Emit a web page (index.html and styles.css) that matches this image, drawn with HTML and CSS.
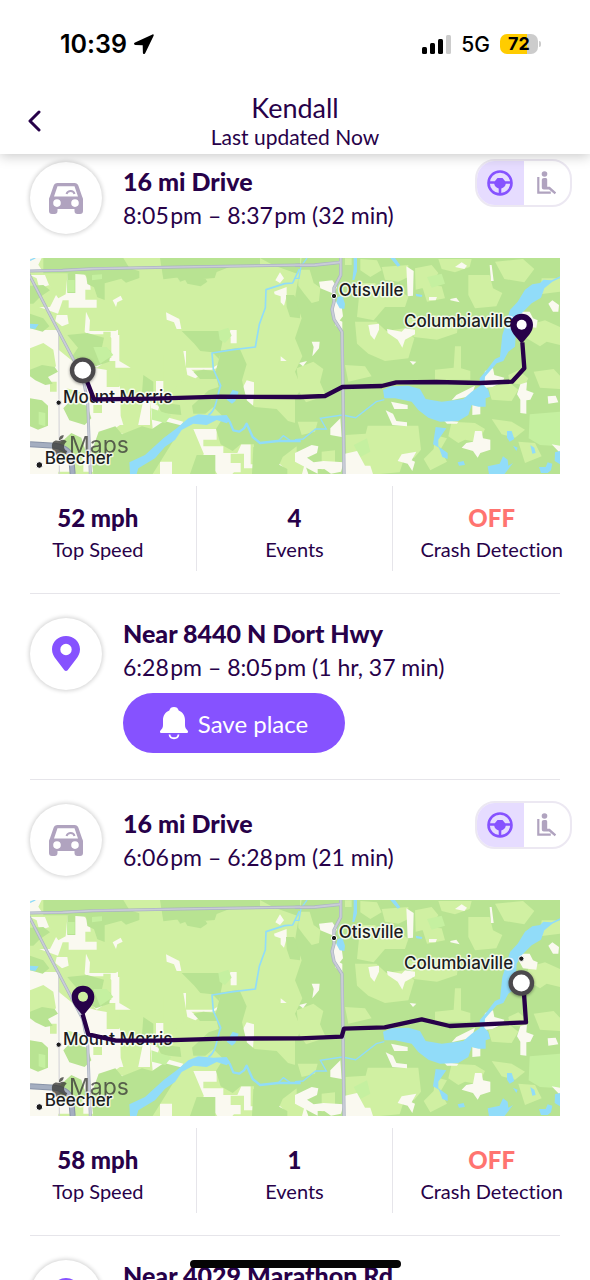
FILE: index.html
```html
<!DOCTYPE html>
<html lang="en">
<head>
<meta charset="utf-8">
<meta name="viewport" content="width=device-width, initial-scale=1">
<title>Kendall</title>
<link rel="stylesheet" href="styles.css">
</head>
<body>
<svg class="defs" aria-hidden="true">
  <symbol id="i-car" viewBox="0 0 34 32">
    <path fill="currentColor" fill-rule="evenodd" d="M8.500 1h17c2 0 3.400 1 4 3l3.600 10.500c.5 1 .9 1.700.9 3V29a3 3 0 0 1-3 3h-2.500a3 3 0 0 1-3-3v-2h-17v2a3 3 0 0 1-3 3H3a3 3 0 0 1-3-3V17.500c0-1.300.4-2 .9-3L4.500 4c.6-2 2-3 4-3zM8.500 4.200 5 14.500h24L25.500 4.200zM8 17.300a3.800 3.800 0 1 0 0 7.600 3.800 3.800 0 0 0 0-7.600zm18 0a3.800 3.800 0 1 0 0 7.600 3.800 3.800 0 0 0 0-7.600z"/>
    <path d="M17.500 12c1.500-4 7-4 8 0" fill="none" stroke="currentColor" stroke-width="2"/>
  </symbol>
  <symbol id="i-pin" viewBox="0 0 28 36">
    <path fill="currentColor" fill-rule="evenodd" d="M14 0c7.700 0 14 5.800 14 13.300 0 4.200-1.800 7.200-4.200 10.300L15.600 34.300a2 2 0 0 1-3.200 0L4.200 23.600C1.800 20.500 0 17.500 0 13.300 0 5.800 6.300 0 14 0zm0 7.800a5.700 5.700 0 1 0 0 11.400 5.700 5.700 0 0 0 0-11.400z"/>
  </symbol>
  <symbol id="i-wheel" viewBox="0 0 26 26">
    <circle cx="13" cy="13" r="11.500" fill="none" stroke="currentColor" stroke-width="2.600"/>
    <path fill="currentColor" d="M2 11.300h5.800L10.500 8h5l2.700 3.300H24v2.400h-5.200c-.5 2.400-2 4-4.500 4.700V24h-2.600v-5.600c-2.500-.7-4-2.300-4.500-4.700H2z"/>
  </symbol>
  <symbol id="i-seat" viewBox="0 0 20 24">
    <circle cx="7.500" cy="3" r="2.800" fill="currentColor"/>
    <path fill="currentColor" d="M7 7h1.500c1 0 1.700.7 1.700 1.700v7h2.600l6.400 5.800-1.500 1.700-5.700-4.700H7c-1.500 0-2.200-.8-2.200-2.200V9.200C4.800 7.800 5.600 7 7 7z"/>
    <path d="M1.300 6v15.700h12.500" fill="none" stroke="currentColor" stroke-width="2.200"/>
  </symbol>

  <symbol id="base-map" viewBox="0 9 1590 648">
    <rect y="9" width="1590" height="648" fill="#d0f0a2"/>
    <!-- open land, west -->
    <g fill="#faf9f0">
      <path d="M0 9h35l-10 20 12 18H0zM0 60h45l12 30 28 40 22-12 6-66h45l22 28 2 24h-16v30h34v24h-84v-22H98L84 176l-84-30zM80 180h32l4 26-20 8-20-16zM168 170l12 26-2 32h78l8-4v20l-20 6-6-12h-66l-8-8zM244 240h24v78l34 20h-46v-20H230l-30 20-60-60 50 50 54-20zM0 212l30 10 10 18H0zM0 225h85v432H0z"/>
      <path d="M80 280l50 40 70 20 30 5 40 50v115l-30 20 60 10 20 110H80zM270 430h90v80h-90zM378 378h24v54h-24zM408 172l40 20 6 30h-14l-8-20-22-8zM460 288h8v50h80l40-24v18l-44 12h-60l24 18-12 8-24-10zM602 225h18v40h-18v-18h-18zM750 52l12 18-12 14-14-8zM732 110l38-14v28l-8 28-10-10v-18l-18-6zM752 304l18 14h-18zM650 376l22 6v32l-4 50h-18v-36l-12-30zM444 55l10 12-6 12zM248 136l24-14 6 12-16 8-4 14z"/>
      <path d="M360 440l28 14-8 24 80 22-20 30-70 10zM490 522h70v32h-40v20h60v20h42l12-26h28v60h40v12h-60v-44h-40v28h30v28h-20l-14 14h-30l-18-26h-48v-30l20-12zM390 620h36v37h-36zM306 586l20 20 38-20 20 24-20 47h-70zM752 576l-8 46 28 26-50-26 2-20zM800 595h60v62h-44l8-30z"/>
    </g>
    <g fill="#d0f0a2">
      <path d="M28 100l30-10 22 26-20 40H0V60l20 10zM0 280l40-16 30 20 8 50-28 20H0zM60 380h20v30H60zM230 346h38v50h-38zM270 395h60l10 40-16 78-40 10-12-40zM190 450h26v24h-26zM110 400l50 14-4 36-46-10zM400 300h60v76l-60 60zM220 230h22v14h-22z"/>
      <path d="M0 450l30 14 24 20v20H0zM120 590h40v66h-36z"/>
    </g>
    <!-- woodland, west -->
    <g fill="#b8e392">
      <path d="M40 9h240l18 30 30 10v20l-40 14-14-12-50 14v50l-22-8-10-30-20-10-4-28-60-4H40zM112 48h24v66h-24zM0 92l40-2 20 16-30 20-20 20H0zM0 176l40 14 18 24-20 16-38-10zM112 240l60-6 50 14-6 28 26 12-4 32-40 14-24-16-50-10 20-30-20-24zM0 344l36-14 38 6 10 14-30 16 14 20-22 4-30-14-16-12zM0 430l36 6 18 16v60l-30 12-24-10zM100 460l20-22 52 14 12 38-20 20-46-14zM84 570l40-36 30 14 16 50-36 30-40-10z"/>
      <path d="M206 530l50-16 20 24 60-24 30 8 36-24 56 14-90 145H190l-8-60zM390 9h300v20l-90 6-40 16-6 18-44 4-30-10-80 10zM520 60l12 20-20 14-40-8-8-14zM690 9h120v50l-40-14-40-14zM768 120h24l18 30v40l-30-4-10-30zM420 30h80l10 30-60 20zM455 228h122v34l-10 50-20-20-36-4-18-22zM548 290l80-12 22 50-14 48 14 60 24 20 66 6 34 36 36 10v58l-52 40-20 46-66-4V568h-40l-24 20-36-20-14-46 22-36-30-30-24 20h-36l-4-24 50-46 30-10-10-44 14-50zM380 440l70 10 4 30-60-6zM340 360l30 20v30l-34 4zM800 560h60v60h-60zM500 600h56v57h-76zM670 576h60l-8 40 50 26v15h-106zM490 350l30-6 36 4 4 24-50 0z"/>
    </g>
    <g fill="#c5f0a0">
      <path d="M565 228l30-10 10 24-20 22-16-10zM112 75h22v36h-22zM364 460l60 20-18 24-40-10zM186 60l30-2v14l-30 4zM26 470l20 4v40l-20-6zM190 276l40 0 20 24-40 26z"/>
    </g>
    <!-- eastern half -->
    <g transform="translate(795 0)">
      <path fill="#b8e392" d="M20 9h775v648H40L10 570l-10-20V430l20-30-20-50 22-46L0 250l20-60L0 130z"/>
      <g fill="#d0f0a2">
        <path d="M10 44h34l12 40 20 14-4 40-22 6-24-30-16-22zM5 340l50-20 30 22-10 40 18 40-60 20-20-30zM150 10h20v20h-20zM196 12l50 4 14 30-34 20-30-20zM260 36l80-6v36l-30 14-40-6zM360 40l50-10 20 24-24 40-44 10zM430 12h100l-6 24-44 16-40-10zM520 60h64l10 40 28 14-18 40-64 6-20-40zM196 84h44l20 22 44-10 36 30-10 30-60 0-34 40-50-10zM180 200l64 0 30 28 54-8 30 30-18 60-70 8-50-22-34-30zM340 190l60 10 20-20 70 14-4 40-60 20-70-8zM480 274h18v66l28 8v26H420v-30l56-6zM150 330l60 4 20 30-70 16zM380 90l60 4 10 36-54 10zM640 360l30-14 30 24-10 20-46-6zM700 210l50-14 45 20v54l-40-10-20 14-40-24zM600 20l84-8 34 30-30 40-60-10zM740 70l55 0v40l-60 8zM152 540l60-4 6-24 152 0 8 72-20 24-30 0-14 44-60 5h-56l-44-40zM420 540l36 10-20 34 20 36-50 26-20-34 30-30zM470 500l70 4 30 18-20 40-40-8-20 10-30-20zM590 492l60 8 40 24-30 24-40-10zM670 560l50 4 20 40-50 20zM80 590l40-4v50l-40 8zM8 500h60l-8 30-40 10zM580 400l60-20 30 24-20 34-60-4zM716 350l60-8 19 20v40l-60-4z"/>
      </g>
      <g fill="#c5f0a0"><path d="M704 478l91-8v104l-60-4-34-20zM396 66l44-10 10 30-40 12zM176 570l40-20 10 40-30 16z"/></g>
      <g fill="#faf9f0">
        <path d="M72 80l40-4 14 20-10 20-40-16zM118 140l20 0 6 44-16 20-14-20zM334 34l22 14-2 74-16 2zM584 30h6l6 48h-8zM480 36l20-14 16 10-8 10zM402 126h24l-4 10h-20zM466 132l18-4 10 14-28-6zM760 146l12-10 20 14-2 20-16 0zM660 170h44l10 20 14 6-4 22-40-4zM220 210l32-4v18l-14 30-12-14zM276 222l44 8 10-10 30 4v14l-30 16-8 24-14-24-30-20zM50 260l24 0-2 20-20 24 4-28zM12 324l24-6-12 16zM344 318l20 2-10 10zM120 190l22 10v30l-22-20zM570 348l24-8 4 20 30 8-6 14-30 14-30 4zM540 392l-10 30-60 14 14-16zM676 388l20-6-2 24 22 8-10 20-12 2v40l-18-2 0-40-10-16zM758 424l24-2 8 20-30 4zM532 450l24 4v24l-24 2zM288 440l50 10 0 12-40 0zM272 466l22 10 10 22 32 4v12l-44-4zM446 496l44 4 6-8-10 14-30 0zM106 520l30-30 4 56-34-6zM540 528l20 0 4 22 22 4 0 30-30 10-8 14-14-20-34-10 14-14 20-4zM320 598l44-8-14 26 10 4-8 28-14-22-30-8zM0 594l50-24 20 4-4 20-30 14 20 14 30-4 60 4-8 28-30 6-20-14-20 0v14L0 620zM150 596l36-8 24 44 16 0 8 25h-84zM770 568l25 4v22z"/>
      </g>
      <g fill="#91dcf9">
        <path d="M264 404L290 394 340 392 375 402 392 432 440 440 505 432 530 410 556 392 554 370 575 345 600 312 615 305 622 240 630 215 645 165 668 140 690 104 712 88 735 84 745 74 770 76 795 64V69L772 80 748 100 738 128 710 145 680 175 665 200 660 275 640 290 625 318 605 325 570 365 568 392 580 405 585 425 572 430V455H550L530 450 520 480 490 498 435 500 400 488 370 465 350 440 300 430 268 430z"/>
        <path d="M422 516l32 4-24 34 0 20 28 20 0 18-16-6-10-28-18-10 4-26zM128 126l14-4 8 24-2 16-14-2-10-18zM286 9h14l16 22-8 4zM176 9h10v40l-8 26h-6l4-36zM636 528l14 0 8 24-14 8-8-12zM654 572l14 6-4 10zM706 570l12 8 4 16-10 2zM578 634l36-8 10-22 14 10 2 18 14-8-26 34-46 0zM780 592l15-4v40l-16-10zM732 636l20 0 6-14 14 4-4 20-10 8h-20zM488 622l18-4 4 12-18 2zM362 116l20 4-2 6-16-2z"/>
      </g>
      <g fill="none" stroke="#91dcf9" stroke-width="4">
        <path d="M268 434l-24 6-62 48-40-8-66 10 18 32-32 0-38 30-24 2"/><path d="M36 9L18 34l-6 36-12 0"/>
      </g>
      <g fill="none" stroke="#abb3c3" stroke-width="10" stroke-linejoin="round">
        <path d="M137 9v52l-20 38v42l-6 22 6 30 24 38 3 180 3 246"/><path d="M0 31l60-1 77-8"/>
      </g>
      <g fill="none" stroke="#c9ccd7" stroke-width="6" stroke-linejoin="round">
        <path d="M137 9v52l-20 38v42l-6 22 6 30 24 38 3 180 3 246"/><path d="M0 31l60-1 77-8"/>
      </g>
    </g>
    <!-- rivers, west -->
    <path fill="#91dcf9" d="M298 622L345 600 400 550 440 520 475 490 505 478 550 482 590 480 600 495 590 505 560 495 530 510 490 506 455 525 435 555 405 575 375 610 325 640 320 657H300zM590 434l18-30 18 6-10 28-10 8zM0 206l26 2-10 14-16-2z"/>
    <g fill="none" stroke="#91dcf9" stroke-linejoin="round">
      <path stroke-width="5" d="M535 480c25-14 26-60 37-88l-22-50-4-48 64-10 66-8 12-68 18-50 2-54 56-18 24-2 20-42"/>
      <path stroke-width="7" d="M590 490l10 12 10 24 18 4 14-10 8-14 18 40 22 18 54-6 68 0"/>
      <path stroke-width="4" d="M742 560l18-18 20 14M0 16l16-7"/>
    </g>
    <!-- roads, west -->
    <path fill="none" stroke="#d0d0d6" stroke-width="3" d="M86 225l2 432"/>
    <g fill="none" stroke="#aab2c2" stroke-width="9">
      <path d="M0 48l98-2 92-5 260-5 360-6M-4 56l62 120 100 190 15 74 8 217"/>
    </g>
    <path fill="none" stroke="#cacdd8" stroke-width="5" d="M0 48l98-2 92-5 260-5 360-6M-4 56l62 120 100 190 15 74 8 217"/>
    <path fill="none" stroke="#8994a8" stroke-width="18" d="M0 568l76 4q44 8 48 40l4 45"/>
    <path fill="none" stroke="#a4aec0" stroke-width="12" d="M0 568l76 4q44 8 48 40l4 45"/>
    <!-- attribution -->
    <g fill="#3b3b38" opacity=".78">
      <path d="M88 558c10-6 18-4 22 2-12 8-10 24 2 28-6 14-14 16-24 10-8 6-14 0-18-8-10-20-2-40 18-32zM87 555c0-10 6-14 14-15 0 8-5 15-14 15z"/>
      <text class="map-brand" x="117" y="594">Maps</text>
    </g>
    <g class="map-label">
      <text x="99" y="443">Mount Morris</text>
      <text x="44" y="627">Beecher</text>
      <text x="926" y="123">Otisville</text>
      <text x="1122" y="215">Columbiaville</text>
    </g>
    <g fill="#1c1c1e" stroke="#fff" stroke-width="3">
      <circle cx="86" cy="443" r="8"/><circle cx="28" cy="630" r="10"/><circle cx="912" cy="123" r="8"/><circle cx="1474" cy="185" r="8"/>
    </g>
  </symbol>
</svg>

<div class="app">
  <header class="top">
    <div class="status">
      <div class="status-side">
        <span class="clock">10:39</span>
        <svg width="20" height="20" viewBox="0 0 20 20" aria-hidden="true"><path d="M18.500.4 1 8.600c-1.600.8-1.200 2.300.3 2.400l7.400.2.200 7.500c0 1.500 1.700 1.900 2.400.3l8.200-17C20.100.8 19.500 0 18.500.4z"/></svg>
      </div>
      <div class="status-side">
        <svg width="29" height="19" viewBox="0 0 29 19" aria-hidden="true"><rect y="12" width="5" height="7" rx="1.500"/><rect x="8" y="8" width="5" height="11" rx="1.500"/><rect x="16" y="4" width="5" height="15" rx="1.500"/><rect x="24" width="5" height="19" rx="1.500" fill="#ccc"/></svg>
        <span class="network">5G</span>
        <span class="battery"><span class="battery-level">72</span></span>
      </div>
    </div>
    <div class="nav">
      <button class="back" type="button" aria-label="Back"><svg width="14" height="22" viewBox="0 0 14 22"><path d="M12 2 3 11l9 9" fill="none" stroke="currentColor" stroke-width="3" stroke-linecap="round" stroke-linejoin="round"/></svg></button>
      <div class="nav-text"><h1>Kendall</h1><p>Last updated Now</p></div>
    </div>
  </header>

  <main class="feed">
    <section class="entry">
      <div class="entry-head">
        <span class="badge muted"><svg width="34" height="32"><use href="#i-car"/></svg></span>
        <div class="entry-text"><h2>16 mi Drive</h2><p>8:05&#8202;pm – 8:37&#8202;pm (32 min)</p></div>
        <div class="toggle" role="radiogroup" aria-label="Role">
          <label><input type="radio" name="role1" aria-label="Driver" checked><svg width="26" height="26"><use href="#i-wheel"/></svg></label>
          <label><input type="radio" name="role1" aria-label="Passenger"><svg width="20" height="24"><use href="#i-seat"/></svg></label>
        </div>
      </div>
      <svg class="map" viewBox="0 9 1590 648" role="img" aria-label="Route map">
        <use href="#base-map" x="0" y="9" width="1590" height="648"/>
        <path class="route" d="M158 346l34 87 180-2 200-6 238 1 75-3 52-27 118-3 44-11 120-1 130 3 97-4 37-40-6-78"/>
        <circle class="route-start" cx="158" cy="346" r="32"/>
        <g class="route-end" transform="translate(1442 176)"><path d="M33 0c19 0 34 14 34 33 0 20-12 30-22 43l-8 10q-4 4-8 0l-8-10C11 63-1 53-1 33-1 14 14 0 33 0z"/><circle cx="33" cy="33" r="15" fill="#fff"/></g>
      </svg>
      <dl class="stats">
        <div><dd>52 mph</dd><dt>Top Speed</dt></div>
        <div><dd>4</dd><dt>Events</dt></div>
        <div><dd class="off">OFF</dd><dt>Crash Detection</dt></div>
      </dl>
    </section>

    <section class="entry place">
      <div class="entry-head">
        <span class="badge accent"><svg width="28" height="36"><use href="#i-pin"/></svg></span>
        <div class="entry-text"><h2>Near 8440 N Dort Hwy</h2><p>6:28&#8202;pm – 8:05&#8202;pm (1 hr, 37 min)</p>
          <button class="save" type="button"><svg width="28" height="34" viewBox="0 0 28 34" aria-hidden="true"><path fill="#fff" d="M14 1c2.500 0 4 1.200 4.700 3.400 4 1.800 6.300 5 6.300 9.600v5c0 2.500 1 4 2.500 5.500 1 1 .5 2.500-1 2.500h-25c-1.500 0-2-1.500-1-2.500C2 23 3 21.500 3 19v-5c0-4.600 2.300-7.800 6.300-9.600C10 2.200 11.500 1 14 1z"/><path d="M9.500 28.500c.5 5 8.500 5 9 0" fill="none" stroke="#fff" stroke-width="1.800"/></svg>Save place</button>
        </div>
      </div>
    </section>

    <section class="entry">
      <div class="entry-head">
        <span class="badge muted"><svg width="34" height="32"><use href="#i-car"/></svg></span>
        <div class="entry-text"><h2>16 mi Drive</h2><p>6:06&#8202;pm – 6:28&#8202;pm (21 min)</p></div>
        <div class="toggle" role="radiogroup" aria-label="Role">
          <label><input type="radio" name="role2" aria-label="Driver" checked><svg width="26" height="26"><use href="#i-wheel"/></svg></label>
          <label><input type="radio" name="role2" aria-label="Passenger"><svg width="20" height="24"><use href="#i-seat"/></svg></label>
        </div>
      </div>
      <svg class="map" viewBox="0 9 1590 648" role="img" aria-label="Route map">
        <use href="#base-map" x="0" y="9" width="1590" height="648"/>
        <path class="route" d="M158 352l17 60 83 19 120 0 200-6 232-1 125-5 7-24 122-4 111-24 84 20 229-11-7-100"/>
        <g class="route-end" transform="translate(126 266)"><path d="M33 0c19 0 34 14 34 33 0 20-12 30-22 43l-8 10q-4 4-8 0l-8-10C11 63-1 53-1 33-1 14 14 0 33 0z"/><circle cx="33" cy="33" r="15" fill="#d0f0a2"/></g>
        <circle class="route-start" cx="1474" cy="258" r="32"/>
      </svg>
      <dl class="stats">
        <div><dd>58 mph</dd><dt>Top Speed</dt></div>
        <div><dd>1</dd><dt>Events</dt></div>
        <div><dd class="off">OFF</dd><dt>Crash Detection</dt></div>
      </dl>
    </section>

    <section class="entry place">
      <div class="entry-head">
        <span class="badge accent"><svg width="28" height="36"><use href="#i-pin"/></svg></span>
        <div class="entry-text"><h2>Near 4029 Marathon Rd</h2></div>
      </div>
    </section>
  </main>
  <div class="home-bar"></div>
</div>
</body>
</html>
```
FILE: styles.css
```css
* { box-sizing: border-box; }
body { margin: 0; background: #fff; color: #270149; font-family: Lato, "Open Sans", sans-serif; font-variant-ligatures: none; }
h1, h2, p, dl, dd, dt { margin: 0; }
svg { display: block; flex: none; }
button { font: inherit; color: inherit; border: 0; background: none; cursor: pointer; }
.defs { position: absolute; width: 0; height: 0; }

.app { position: relative; display: flex; flex-direction: column; height: 100vh; overflow: hidden; }
.top { position: relative; z-index: 1; flex: none; background: #fff; box-shadow: 0 2px 12px rgba(0, 0, 0, .22); }
.status { display: flex; justify-content: space-between; align-items: center; height: 88px; padding: 0 52px 0 60px; color: #000; font-family: Inter, sans-serif; }
.status-side { display: flex; align-items: center; gap: 7px; }
.status-side:last-child { gap: 10px; }
.clock { font-size: 25px; font-weight: 600; }
.network { font-size: 21px; font-weight: 500; }
.battery { position: relative; width: 38px; height: 20px; border-radius: 7px; background: linear-gradient(90deg, #fc0 72%, #ccc 72%); }
.battery::after { content: ""; position: absolute; left: 39px; top: 7px; width: 2px; height: 6px; border-radius: 0 2px 2px 0; background: #ccc; }
.battery-level { display: block; text-align: center; font-size: 18px; line-height: 20px; font-weight: 700; }
.nav { display: grid; grid-template-columns: 44px 1fr 44px; align-items: center; height: 66px; padding: 0 12px; }
.back { display: flex; justify-content: center; padding: 12px; }
.nav-text { text-align: center; }
.nav h1 { font-size: 27px; line-height: 32px; font-weight: 400; }
.nav p { font-size: 21px; line-height: 26px; }

.feed { flex: 1; min-height: 0; overflow-y: auto; scrollbar-width: none; padding-top: 5px; }
.entry + .entry { padding-top: 21px; }
.entry:not(:last-child)::after { content: ""; display: block; height: 1px; margin: 22px 30px 0; background: #e6e5ea; }
.entry-head { display: flex; align-items: flex-start; padding: 0 18px 0 30px; }
.badge { display: flex; flex: none; align-items: center; justify-content: center; width: 72px; height: 72px; margin-top: 3px; border-radius: 50%; background: #fff; box-shadow: 0 0 4px 1px rgba(0, 0, 0, .18); }
.muted { color: #b0a3bf; }
.accent { color: #8652ff; }
.entry-text { flex: 1; padding: 5px 0 0 21px; }
.entry-text h2 { font-size: 25px; line-height: 34px; font-weight: 900; }
.entry-text p { font-size: 23px; line-height: 34px; }
.place .entry-text { padding-top: 1px; }
.save { display: flex; align-items: center; justify-content: center; gap: 10px; width: 222px; height: 60px; margin: 9px 0 4px; padding: 0; border-radius: 30px; background: #8652ff; color: #fff; font-size: 24px; }

.toggle { display: flex; width: 97px; height: 48px; border: 2px solid #ece8f2; border-radius: 20px; overflow: hidden; }
.toggle label { display: flex; flex: 1; align-items: center; justify-content: center; color: #b0a3bf; cursor: pointer; }
.toggle label:has(input:checked) { background: #e6dcff; color: #8652ff; }
.toggle input { position: absolute; opacity: 0; width: 1px; height: 1px; margin: 0; }

.map { width: calc(100% - 60px); height: auto; margin: 24px 30px 12px; }
.map-label { font: 500 51px Inter, sans-serif; fill: #1c1c1e; stroke: #fff; stroke-width: 9px; stroke-opacity: .8; stroke-linejoin: round; paint-order: stroke; }
.map-brand { font: 400 69px Inter, sans-serif; }
.route { fill: none; stroke: #270149; stroke-width: 13px; stroke-linejoin: round; }
.route-start { fill: #fff; stroke: #4b494c; stroke-width: 13px; filter: drop-shadow(0 3px 5px rgba(0, 0, 0, .4)); }
.route-end { fill: #270149; }

.stats { display: grid; grid-template-columns: repeat(3, 1fr); text-align: center; }
.stats div { display: flex; flex-direction: column; height: 85px; padding-top: 16px; }
.stats div:not(:last-child) { border-right: 1px solid #e6e5ea; }
.stats dd { font-size: 24px; line-height: 32px; font-weight: 900; }
.stats dt { font-size: 20px; line-height: 30px; }
.stats .off { color: #ff7470; }

.home-bar { position: absolute; z-index: 2; left: 50%; bottom: 12px; width: 211px; height: 8px; margin-left: -105px; border-radius: 4px; background: #050505; }
```
